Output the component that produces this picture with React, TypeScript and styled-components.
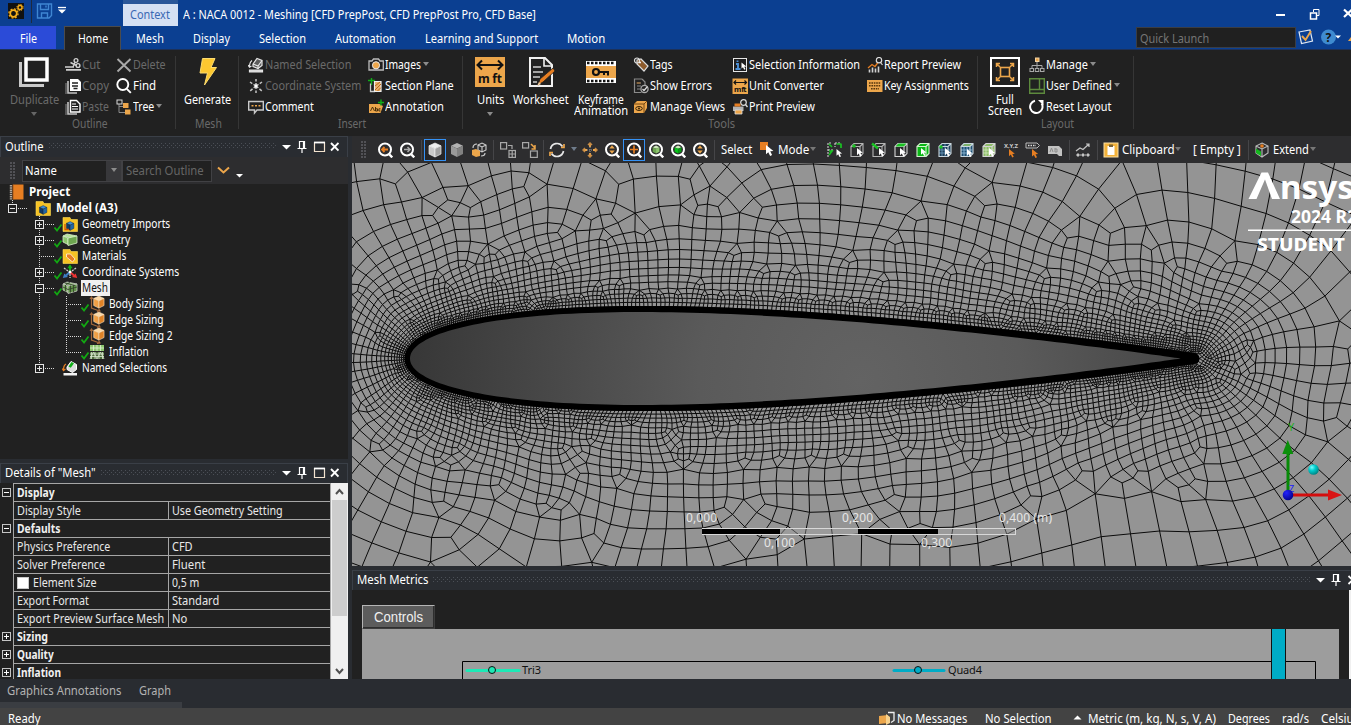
import React, { useLayoutEffect, useRef, useState } from 'react';
import styled, { createGlobalStyle } from 'styled-components';

/* ------------------------------------------------------------------ */
/* Theme                                                               */
/* ------------------------------------------------------------------ */
const c = {
  blue: '#0b3f91',
  dark: '#212121',
  bar: '#2d2d2f',
  frame: '#292c31',
  edge: '#3a3f47',
  text: '#ffffff',
  dim: '#6a6a6a',
  orange: '#eca64b',
  deep: '#e67e22',
  green: '#0fae17',
};

const Global = createGlobalStyle`
  html, body { margin: 0; padding: 0; background: ${c.frame}; overflow: hidden; }
  *, *::before, *::after { box-sizing: border-box; }
  body { font-family: "Noto Sans", "Open Sans", sans-serif; font-size: 12px; color: ${c.text}; }
  svg { display: block; flex: none; }
`;

/* ------------------------------------------------------------------ */
/* Text condensed or tracked to a given width                          */
/* ------------------------------------------------------------------ */
const Text = styled.span<{ $w: number; $color?: string; $bold?: boolean; $size?: number }>`
  display: block;
  flex: none;
  width: ${(p) => p.$w}px;
  white-space: pre;
  line-height: 16px;
  color: ${(p) => p.$color || c.text};
  font-weight: ${(p) => (p.$bold ? 700 : 400)};
  font-size: ${(p) => p.$size || 12}px;
`;
const Glyphs = styled.span`
  display: inline-block;
  vertical-align: top;
  line-height: inherit;
  transform-origin: 0 50%;
`;

type FitProps = { w: number; children: string; color?: string; bold?: boolean; size?: number };
function Fit({ w, children, color, bold, size }: FitProps) {
  const ref = useRef<HTMLSpanElement>(null);
  const [natural, setNatural] = useState(0);
  useLayoutEffect(() => {
    if (ref.current) setNatural(ref.current.offsetWidth);
  }, [children]);
  const adjust: React.CSSProperties = natural > w ? { transform: `scaleX(${w / natural})` } : {};
  return (
    <Text $w={w} $color={color} $bold={bold} $size={size}>
      <Glyphs ref={ref} style={adjust}>{children}</Glyphs>
    </Text>
  );
}

/* ------------------------------------------------------------------ */
/* Icons                                                               */
/* ------------------------------------------------------------------ */
const lens = (color = '#fff') => (
  <g fill="none" stroke={color} strokeWidth="2">
    <circle cx="8" cy="7.5" r="6" />
    <path d="M12.2 12.2l3 3.2" strokeWidth="2.4" />
  </g>
);
const cubeLines = (s: string) => (
  <path d="M2 4.500h9v10h-9zM2 4.500l3-3h9v10l-3 3M11 4.500l3-3" fill="none" stroke={s} strokeWidth="1.100" />
);
const pointer = (x: number, y: number, f = '#fff', k = 1) => (
  <path transform={`translate(${x} ${y}) scale(${k})`} d="M0 0v8l2-1.800 1.600 3.300 1.700-.8-1.600-3.200 2.800-.2z" fill={f} />
);
const sheetPair = (
  <g>
    <path d="M3 3v12h9" fill="none" stroke="#c4c4c4" strokeWidth="1.600" />
    <path d="M1 5v11" stroke="#8d8d8d" strokeWidth="1" />
  </g>
);
const iso = (top: string, left: string, right: string, line?: string) => (
  <g stroke={line || 'none'} strokeWidth=".7" strokeLinejoin="round">
    <path d="M8 1l6 2.800-6 2.800-6-2.800z" fill={top} />
    <path d="M2 3.800l6 2.800v8.400l-6-3z" fill={left} />
    <path d="M14 3.800l-6 2.800v8.400l6-3z" fill={right} />
  </g>
);
const folder = <path d="M1 1.500h7l1 2h6.500V15.500H1z" fill="#f7c325" stroke="#fddc55" strokeWidth=".6" />;
const smallCube = (
  <g transform="translate(3.200 5) scale(.62)">{iso('#3f8fd8', '#123a66', '#2267a8', '#0d2440')}</g>
);
const longBox = (line: string) => (
  <g stroke={line} strokeWidth=".8" strokeLinejoin="round">
    <path d="M1 4l4-2 10 2-4 2.500z" fill="#b6e39a" />
    <path d="M1 4l5 2v6.500L1 10z" fill="#8cc66d" />
    <path d="M6 6l9-2v7l-9 2.500z" fill="#6da650" />
  </g>
);

const icons: Record<string, React.ReactNode> = {
  cut: (
    <g fill="none" stroke="#d0d0d0" strokeWidth="1.400">
      <path d="M0 10h9M1 12.800h15" strokeWidth="1.700" /><circle cx="11" cy="3.500" r="1.900" /><circle cx="13" cy="8.500" r="1.900" /><path d="M10 5.500l-2 4.500M11.500 8.500l-6-3" />
    </g>
  ),
  copy: (<g>{sheetPair}<path d="M5 1h8l3 3v9H5z" fill="#fff" /><path d="M7 5h6M7 8h6M8.500 10.500h4" stroke="#212121" strokeWidth="1.300" /></g>),
  paste: (<g>{sheetPair}<path d="M5.500 1.500h6l3.500 3.500v8H5.500z" fill="#212121" stroke="#fff" strokeWidth="1.400" /><path d="M7 5h4M7 7.500h6M7 10h6" stroke="#fff" strokeWidth="1" /></g>),
  delete: <path d="M1.500 2l13 12.500M14.500 2l-13 12.500" stroke="#a9a9a9" strokeWidth="1.900" fill="none" />,
  find: <g fill="none" stroke="#fff" strokeWidth="1.900"><circle cx="6.800" cy="6.500" r="5.500" /><path d="M10.800 10.800l4 4" /></g>,
  tree: (
    <g>
      <path d="M3 5v8.500h6M3 7.500h4" fill="none" stroke="#8c8c8c" />
      <rect x="1" y="1" width="5" height="4" fill="none" stroke="#d8d8d8" />
      <rect x="7" y="4" width="5.500" height="5" fill={c.orange} /><rect x="9" y="10.500" width="5.500" height="5" fill={c.orange} />
    </g>
  ),
  named: (
    <g fill="none" stroke="#e6e6e6" strokeWidth="1.200">
      <path d="M1.500 13h13v2h-13z" fill="#d5d5d5" /><path d="M5 7l4-5.500 5 2v5l-4 3-5-2z" fill="#5c5c5c" /><path d="M5 7l5 2 4-5.500M10 9v3M4 3.500C2 5 1.500 7 1.500 10M0 8l1.500 2.200L3.500 9" />
    </g>
  ),
  csys: (
    <g stroke="#c4c4c4" strokeWidth="1.500" strokeDasharray="3 1.500"><path d="M8 8V1M8 8L2 4M8 8l6-4M8 8l-6 5M8 8l6 5M8 8v7" /><circle cx="8" cy="8" r="1.600" fill="#fff" stroke="none" /></g>
  ),
  comment: (<g><path d="M.7 2.500h14.600v8.500H9l-2.500 3v-3H.7z" fill="none" stroke="#c9c9c9" strokeWidth="1.400" /><path d="M3.500 6.800h2M7 6.800h2M10.500 6.800h2" stroke={c.orange} strokeWidth="1.500" /></g>),
  camera: (<g><path d="M1 4h3l1.500-2h5L12 4h3.300v9H1z" fill="none" stroke="#bcbcbc" strokeWidth="1.300" /><circle cx="8" cy="8.300" r="3.600" fill={c.orange} stroke="#e8e8e8" /></g>),
  section: (
    <g><path d="M3.500 0v7M0 2.500h7" stroke={c.green} strokeWidth="1.400" /><path d="M2.500 5.500v8H7" fill="none" stroke="#ccc" strokeWidth="1.300" /><path d="M6.500 3.500h6.500v10H6.500z" fill="#e9b06c" stroke="#eee" strokeWidth="1.200" /><path d="M7 8l5-4M7 12l6-6M9.500 13l3.500-3.500" stroke="#b8651a" /></g>
  ),
  annotation: (<g><path d="M1 5h10.500l3.500 2-2.500 7H1z" fill={c.orange} /><path d="M2.500 12l2-4 2 4M7.500 8v4h2V9.800h-2M12.500 9.800h-1.600V12h1.600" fill="none" stroke="#3a2506" strokeWidth=".9" /><path d="M13 .5v6M10 3.500h6" stroke={c.green} strokeWidth="1.400" /></g>),
  tags: (
    <g><path d="M4 3l4-1 7 7-4 5-7-7z" fill="#8d5a2a" stroke="#dcdcdc" strokeWidth="1.200" /><circle cx="4" cy="3.500" r="2.500" fill="none" stroke="#dcdcdc" strokeWidth="1.200" /><circle cx="7" cy="5.500" r="1" fill="#fff" /></g>
  ),
  errors: (
    <g fill="none"><path d="M9 1H1.500v13.500h7M9 1l3 3v3M4 5h4M4 8h4M4 11h3" stroke="#8a8a8a" strokeWidth="1.200" /><path d="M3.500 5h4" stroke="#b87a30" /><circle cx="11.500" cy="11" r="3.600" stroke="#a9a9a9" strokeWidth="1.300" /><path d="M9.500 11l1.500 1.500 3.500-4" stroke="#ddd" strokeWidth="1.200" /></g>
  ),
  views: (<g><path d="M1 5l3-3h10v7l-3 5H1z" fill={c.orange} /><path d="M1 5h10v9M11 5l3-3" stroke="#6b3e0d" strokeWidth=".9" fill="none" /><ellipse cx="6" cy="9.500" rx="3.300" ry="2" fill="none" stroke="#3a2506" /><circle cx="6" cy="9.500" r="1" fill="#3a2506" /></g>),
  selinfo: (<g><rect x="1.500" y="1.500" width="13" height="13" fill="#1d1d1f" stroke="#e6e6e6" /><path d="M5.500 3.500v1.500M4 7h2v5M3.500 12h5" stroke="#4b8fd6" strokeWidth="1.900" fill="none" />{pointer(9.500, 5.500, '#fff', 0.75)}</g>),
  unitconv: (<g><rect x=".5" y=".5" width="15.500" height="15.500" fill={c.orange} /><path d="M2 4.500h12.500M4 2.500l-2 2 2 2M12.500 2.500l2 2-2 2" fill="none" stroke="#111" strokeWidth="1.200" /><text x="2" y="14" fontSize="7.500" fontWeight="700" fill="#111" textLength="12.500">m ft</text></g>),
  print: (<g><circle cx="11.500" cy="3.500" r="2.800" fill="none" stroke="#ddd" strokeWidth="1.200" /><path d="M13.500 5.500l2 2.500" stroke="#ddd" strokeWidth="1.400" /><path d="M1 7.500h10.500v4.500H1z" fill="#b4b4b4" /><path d="M2.500 4.500h6v3h-6z" fill={c.deep} /><path d="M3 11h7v4H3z" fill={c.orange} stroke="#ddd" strokeWidth=".8" /></g>),
  report: (
    <g><path d="M2.500 15.500v-3M5.500 15.500v-5M8.500 15.500v-4M11.500 15.500v-6" stroke="#d0d0d0" strokeWidth="1.600" /><path d="M1 11l4-3.500 3 2 3-4" stroke={c.deep} strokeWidth="1.300" fill="none" /><circle cx="12" cy="3.200" r="2.700" fill="none" stroke="#ddd" strokeWidth="1.200" /><path d="M13.500 5.500l2 2.500" stroke="#ddd" strokeWidth="1.200" /></g>
  ),
  keys: (<g><rect x="0" y="2" width="15.500" height="12" fill={c.orange} /><path d="M2 5h12M2 7.800h12M4 10.800h8" stroke="#55360c" strokeWidth="1.500" strokeDasharray="1.600 .8" /></g>),
  manage: (<g fill="none" stroke="#a8a8a8"><path d="M8 5v4M3 11V8.500h10V11M8 9v2" /><rect x="1" y="11.500" width="3.500" height="3" /><rect x="6.300" y="11.500" width="3.500" height="3" /><rect x="11.500" y="11.500" width="3.500" height="3" /><rect x="6.500" y="1" width="3.500" height="3.500" fill={c.orange} stroke="#f3d3a4" /></g>),
  userdef: <path d="M.7.7h14.600v14.600H.7zM.7 11.500h14.600M10.500.7v10.800M6.500 11.500h0M13 11.500v0" fill="none" stroke="#5d8a3d" strokeWidth="1.400" />,
  reset: (<g fill="none" stroke="#fff" strokeWidth="2"><path d="M12.600 4.500A6.200 6.200 0 1 1 6 1.700" /><path d="M9 1h5.500v5.500z" fill="#fff" stroke="none" /></g>),
  /* graphics toolbar */
  zprev: (<g>{lens()}<path d="M5 7.500h6M7.500 5L5 7.500 7.500 10" fill="none" stroke={c.deep} strokeWidth="1.800" /></g>),
  znext: (<g>{lens()}<path d="M5 7.500h6M8.500 5l2.500 2.500L8.500 10" fill="none" stroke="#aaa" strokeWidth="1.500" /></g>),
  shaded: iso('#ededed', '#c9c9c9', '#a2a2a2', '#eee'),
  shaded2: iso('#b2b2b2', '#9a9a9a', '#818181'),
  wire: (<g><path d="M7 3l4-2 4 2v5l-4 2-4-2zM7 3l4 2 4-2M11 5v5" fill="none" stroke="#ccc" strokeWidth="1.100" /><path d="M1 8l4-1 4 2v5l-4 1-4-2z" fill={c.orange} /><path d="M2 6c0-3 2-4 4-4M14 11c0 2-2 3-4 3" fill="none" stroke="#ccc" strokeWidth="1.200" /></g>),
  grid1: (<g fill="none" stroke="#a8a8a8" strokeWidth="1.200"><rect x=".6" y=".6" width="6" height="6.400" /><rect x="9" y="8.500" width="6.400" height="6.900" /><path d="M12.200 8.500v7M9 12h6.400M8 3.500h4V7" /></g>),
  grid2: (<g fill="none" stroke="#a8a8a8" strokeWidth="1.200"><rect x=".6" y=".6" width="6" height="5.400" /><rect x="8.500" y="9" width="6.800" height="6.400" /><path d="M9 2l4 4M13 3v4H9.500" stroke={c.orange} strokeWidth="1.500" /></g>),
  rotate: (<g fill="none" strokeWidth="1.700"><path d="M1.500 7A6.600 6.600 0 0 1 13.500 4.500M14.500 9A6.600 6.600 0 0 1 2.500 11.500" stroke="#e8e8e8" /><path d="M12 5.500h3V2M4 10.500H1V14" stroke={c.orange} /></g>),
  pan: (<g fill="none" strokeWidth="1.500"><path d="M8 5V1.500M8 11v3.500M5 8H1.500M11 8h3.500" stroke={c.orange} strokeWidth="1.800" /><path d="M6 3l2-2 2 2M6 13l2 2 2-2M3 6L1 8l2 2M13 6l2 2-2 2" stroke="#c58a45" /><path d="M8 5v6M5 8h6" stroke="#777" strokeDasharray="1 1" /></g>),
  zoomud: (<g>{lens()}<path d="M8 3.300l2.700 3.200H5.300zM8 11.700L5.300 8.500h5.400z" fill={c.orange} /></g>),
  zoombox: (<g>{lens()}<path d="M8 3.500v8M4 7.500h8" stroke={c.deep} strokeWidth="1.700" /></g>),
  zoomfit: (<g>{lens()}<g transform="translate(3.500 3) scale(.57)">{iso('#cfe8bd', '#6da650', '#8fc870')}</g></g>),
  zoomsel: (<g>{lens()}<g transform="translate(3.500 3) scale(.57)">{iso('#cfe8bd', '#09c31a', '#0a9b17')}</g></g>),
  mode: (<g><path d="M0 0h8v8H0z" fill={c.deep} />{pointer(6, 3, '#fff', 1.15)}</g>),
  fourc: (<g><path d="M1 15V1h4M1 8h5M8 1h6M8 1v4" stroke="#cfcfcf" strokeWidth="1.100" strokeDasharray="2 1" fill="none" /><path d="M2 2l3 3M9.500 2h5M14 2v4M2 9l3 0-3 4" stroke="#19c322" strokeWidth="1.700" fill="none" />{pointer(9.500, 7, '#fff', 0.85)}</g>),
  selv: (<g>{cubeLines('#b5b5b5')}<circle cx="5" cy="4" r="1.800" fill="#19c322" />{pointer(8, 6, '#fff', 0.9)}</g>),
  sele: (<g>{cubeLines('#b5b5b5')}<path d="M1 1.500l6 5" stroke="#19c322" strokeWidth="2.400" />{pointer(8, 6, '#fff', 0.9)}</g>),
  self: (<g>{cubeLines('#d5d5d5')}<path d="M2.500 4.500l3-3h8l-3 3z" fill="#19c322" />{pointer(7, 6, '#fff', 0.9)}</g>),
  selb: (<g><path d="M2 4.500l3-3h9v10l-3 3H2z" fill="#0bb716" />{cubeLines('#d4f3cf')}{pointer(6, 6, '#fff', 0.85)}</g>),
  seln: (<g><path d="M2 4.500l3-3h9v10l-3 3H2z" fill="#1d3d57" /><path d="M5 4v10M8 2v12M2 8h11M2 11h11" stroke="#6d9fc2" strokeWidth=".8" />{cubeLines('#c9d7df')}<circle cx="4" cy="5" r="1.700" fill="#19c322" />{pointer(8, 6, '#fff', 0.9)}</g>),
  self2: (<g><path d="M2 4.500l3-3h9v10l-3 3H2z" fill="#1f4f72" /><path d="M2 4.500l3-3h9l-3 3z" fill="#7cb06b" /><path d="M5 4v10M8 4v10M2 8h11M2 11h11" stroke="#8bb7d6" strokeWidth=".9" />{cubeLines('#c9d7df')}{pointer(8, 7, '#fff', 0.85)}</g>),
  selel: (<g><path d="M2 4.500l3-3h9v10l-3 3H2z" fill="#8dbb68" /><path d="M5 4v10M8 4v10M2 8h11M2 11h11" stroke="#d3ebbf" strokeWidth=".8" />{cubeLines('#d3d3d3')}{pointer(8, 6, '#fff', 0.95)}</g>),
  xyz: (<g><text x="1" y="5.500" fontSize="6" fontWeight="700" fill="#c9c9c9" textLength="14">X,Y,Z</text>{pointer(6, 7, c.deep, 0.9)}</g>),
  probe: (<g><path d="M1 1h11l2.500 2.500L12 6H1z" fill="none" stroke="#bbb" /><path d="M3 3.500h8" stroke="#ddd" strokeWidth="1.500" strokeDasharray="1.500 1" />{pointer(7, 7, c.deep, 0.95)}</g>),
  label: (<g><path d="M1 4h11l3 3v7h-3l-2-2H1z" fill="#c2c2c2" /><path d="M3 10l1.500-4L6 10M8 6v4h2V7H8" fill="none" stroke="#8b8b8b" /></g>),
  chart: (<g fill="none" stroke="#c4c4c4" strokeWidth="1.200"><path d="M1 9l4-3 3 1.500L14 2M11 2h3v3M1 13h14" /><path d="M3 11.500v3M8 11.500v3M13 11.500v3" strokeWidth="2" /></g>),
  clipboard: (<g><rect x="1" y="1" width="14" height="14" fill="#f3b23a" stroke="#fbe0a5" /><rect x="4.500" y="4" width="7" height="9" fill="#fff" /><rect x="6" y="2.500" width="4" height="2.500" fill="#7c6435" /></g>),
  extend: (<g><g fill="none" stroke="#bcbcbc" strokeWidth="1.100"><path d="M8 1l6 3v7l-6 4-6-4V4zM2 4l6 3 6-3M8 7v8" /></g><path d="M2 6.500l5 3V14l-5-3z" fill="#13b81d" /><circle cx="8" cy="4" r="1.800" fill={c.deep} /></g>),
  /* tree */
  project: (<g><path d="M5 0.500h10.500v15H5z" fill={c.deep} /><path d="M3 1v14.500" stroke="#b2a89c" strokeWidth="2.400" strokeDasharray="1.500 .7" /><path d="M4.800 .5v15" stroke="#7d451a" /></g>),
  model: (<g>{folder}{smallCube}</g>),
  geomimp: (<g>{folder}{smallCube}<path d="M3 8v5.500h4" fill="none" stroke="#d35400" strokeWidth="1.300" /></g>),
  geometry: longBox('#d9f0ca'),
  materials: (<g>{folder}<path d="M4.500 6l4 0 4.500 5-2.500 3-6-5z" fill={c.deep} stroke="#fff" strokeWidth=".7" /></g>),
  coords: (
    <g strokeWidth="2"><path d="M8 7V1.500" stroke={c.green} /><path d="M5.300 4.300L8 .5l2.700 3.800z" fill={c.green} /><path d="M8 8l-4 3.500" stroke="#3d7fc4" /><path d="M.8 14l1.500-4.500L6 13z" fill="#3d7fc4" /><path d="M8 8l4 3.500" stroke="#e33" /><path d="M15.200 14l-1.500-4.500L10 13z" fill="#e33" /><path d="M2 4l4 3M14 4l-4 3M8 10v4" stroke="#ccc" strokeWidth="1.300" strokeDasharray="2 1" /><circle cx="8" cy="8" r="1.500" fill="#fff" /></g>
  ),
  mesh: (<g><g opacity=".85">{longBox('#e2e9dc')}</g><path d="M3 3l10 2.500M8 2.500l-4 2M3.500 5v6.500M8.500 5.500v7M11.500 5v7M1 7l5 2.500 9-2.500" fill="none" stroke="#33452a" strokeWidth=".9" /></g>),
  sizing: (<g><g transform="translate(3 -.8) scale(.86)">{iso('#fbd9a8', '#ef9f45', '#dd8227', '#ffe3bd')}</g><path d="M2.500 1v11l8 3M1 3l1.500-2L4 3M8 15.500l3-.5-1.500-2.500" fill="none" stroke="#a3683a" strokeWidth="1.200" /></g>),
  inflation: (<g><path d="M1 1h14v6H1z" fill="#8dc66f" /><path d="M1 4h14M4.500 1v6M8 1v6M11.500 1v6" stroke="#e1f3d6" strokeWidth=".8" /><path d="M1 8h14v7H1z" fill="#4d6b3d" /><path d="M1 10h14M1 12.500h14M1 15l3.500-7L8 15l3.500-7 3.500 7M2.500 8v7M6 8v7M10 8v7M13.500 8v7" fill="none" stroke="#d9e8cf" strokeWidth=".8" /></g>),
  namedc: (<g><path d="M1.500 13h13.500v2.500H1.500z" fill="#f3f3f3" /><path d="M5 7l4-5.500 5.500 3v5l-4 3-5.500-3z" fill="#dcdcdc" stroke="#fff" /><path d="M6.500 6.500l3-4.500 2.500 1.200-3.200 4.600z" fill={c.green} /><path d="M4 4c-2 1-2.500 3-2.500 6M.3 8.500l1.200 2 2-1.500" fill="none" stroke={c.deep} strokeWidth="1.300" /></g>),
};

function Icon({ name, size = 16 }: { name: string; size?: number }) {
  return <svg width={size} height={size} viewBox="0 0 16 16">{icons[name]}</svg>;
}

const Caret = styled.i<{ $color?: string; $ml?: number }>`
  display: block;
  flex: none;
  margin-left: ${(p) => p.$ml ?? 1}px;
  margin-bottom: 1px;
  border: 3.5px solid transparent;
  border-top: 4px solid ${(p) => p.$color || '#8b8b8b'};
  border-bottom: 0;
`;

/* ------------------------------------------------------------------ */
/* Title bar and tabs                                                  */
/* ------------------------------------------------------------------ */
const Window = styled.div`
  width: 1351px;
  height: 725px;
  display: flex;
  flex-direction: column;
  overflow: hidden;
  background: ${c.frame};
`;
const TitleBar = styled.div`
  height: 26px;
  flex: none;
  display: flex;
  background: ${c.blue};
`;
const QuickTools = styled.div`
  width: 123px;
  padding: 3px 0 0 8px;
  display: flex;
  align-items: flex-start;
`;
const ToolDivider = styled.i`
  width: 1px;
  height: 23px;
  margin: -3px 4px 0 7px;
  background: #1f2a3f;
`;
const ContextTab = styled.div`
  width: 55px;
  height: 26px;
  border-top: 4px solid #2a5699;
  background: #d5e0f3;
  padding: 3px 0 0 7px;
`;
const DocTitle = styled.div`
  padding: 7px 0 0 5px;
  flex: 1;
`;
const WindowButtons = styled.div`
  padding: 8px 0 0;
  width: 75px;
`;
const TabRow = styled.div`
  height: 24px;
  flex: none;
  display: flex;
  background: ${c.blue};
  border-bottom: 1px solid #1d3159;
`;
const Tab = styled.div<{ $w: number; $kind?: 'file' | 'active'; $gap?: number }>`
  width: ${(p) => p.$w}px;
  margin-left: ${(p) => p.$gap || 0}px;
  height: ${(p) => (p.$kind === 'active' ? 24 : 23)}px;
  padding-top: ${(p) => (p.$kind === 'active' ? 4 : 5)}px;
  display: flex;
  justify-content: center;
  background: ${(p) => (p.$kind === 'file' ? '#2b4bd8' : p.$kind === 'active' ? c.dark : 'transparent')};
  border: ${(p) => (p.$kind === 'active' ? '1px solid #4b4b4b' : '0')};
  border-bottom: 0;
`;
const TabTail = styled.div`
  margin-left: auto;
  width: 215px;
  display: flex;
  padding-top: 1px;
`;
const Search = styled.div`
  width: 160px;
  height: 21px;
  border: 1px solid #3a3d44;
  background: #202020;
  padding: 3px 3px;
`;

/* ------------------------------------------------------------------ */
/* Ribbon                                                              */
/* ------------------------------------------------------------------ */
const Ribbon = styled.div`
  height: 86px;
  flex: none;
  display: flex;
  background: ${c.dark};
`;
const Group = styled.section<{ $w: number }>`
  width: ${(p) => p.$w}px;
  height: 86px;
  flex: none;
  position: relative;
  display: flex;
  flex-direction: column;
  &::after {
    content: '';
    position: absolute;
    right: 0;
    top: 6px;
    height: 73px;
    width: 1px;
    background: #363636;
  }
`;
const GroupBody = styled.div`
  display: flex;
  height: 66px;
  flex: none;
`;
const GroupName = styled.div<{ $pad: number }>`
  padding-left: ${(p) => p.$pad}px;
`;
const Big = styled.div<{ $w: number; $gap?: number }>`
  width: ${(p) => p.$w}px;
  margin-left: ${(p) => p.$gap || 0}px;
  padding-top: 7px;
  flex: none;
  display: flex;
  flex-direction: column;
  align-items: center;
`;
const BigLabel = styled.div`
  margin: 7px 0;
  display: flex;
  flex-direction: column;
  align-items: center;
  && > * { line-height: 11px; }
`;
const Column = styled.div<{ $w: number; $gap?: number }>`
  width: ${(p) => p.$w}px;
  margin-left: ${(p) => p.$gap || 0}px;
  padding-top: 4px;
  flex: none;
`;
const Item = styled.div`
  height: 21px;
  display: flex;
  align-items: center;
  gap: 1px;
`;

type Cmd = { icon: string; text: string; w: number; off?: boolean; caret?: boolean };
function Commands({ w, gap, items }: { w: number; gap?: number; items: Cmd[] }) {
  return (
    <Column $w={w} $gap={gap}>
      {items.map((it) => (
        <Item key={it.text}>
          <Icon name={it.icon} />
          <Fit w={it.w} color={it.off ? c.dim : c.text}>{it.text}</Fit>
          {it.caret && <Caret />}
        </Item>
      ))}
    </Column>
  );
}

function RibbonBar() {
  return (
    <Ribbon>
      <Group $w={176}>
        <GroupBody>
          <Big $w={68}>
            <svg width="30" height="30" viewBox="0 0 30 30"><path d="M1.500 5v23.500H25" fill="none" stroke="#c9c9c9" strokeWidth="3" /><rect x="7" y="2" width="21" height="21" fill="#212121" stroke="#fff" strokeWidth="3.500" /></svg>
            <BigLabel><Fit w={49} color={c.dim}>Duplicate</Fit></BigLabel>
            <Caret $ml={0} $color="#666" />
          </Big>
          <Commands w={48} gap={-3} items={[{ icon: 'cut', text: 'Cut', w: 18, off: true }, { icon: 'copy', text: 'Copy', w: 27, off: true }, { icon: 'paste', text: 'Paste', w: 27, off: true }]} />
          <Commands w={58} gap={3} items={[{ icon: 'delete', text: 'Delete', w: 33, off: true }, { icon: 'find', text: 'Find', w: 23 }, { icon: 'tree', text: 'Tree', w: 21, caret: true }]} />
        </GroupBody>
        <GroupName $pad={72}><Fit w={36} color={c.dim}>Outline</Fit></GroupName>
      </Group>
      <Group $w={63}>
        <GroupBody>
          <Big $w={63}>
            <svg width="30" height="30" viewBox="0 0 30 30"><path d="M9.500 1.500H22l-4 9h5.500L11.500 28l3-12H7z" fill="#fdc830" stroke="#fddc70" /></svg>
            <BigLabel><Fit w={47}>Generate</Fit></BigLabel>
          </Big>
        </GroupBody>
        <GroupName $pad={19}><Fit w={27} color={c.dim}>Mesh</Fit></GroupName>
      </Group>
      <Group $w={224}>
        <GroupBody>
          <Commands w={119} gap={9} items={[{ icon: 'named', text: 'Named Selection', w: 86, off: true }, { icon: 'csys', text: 'Coordinate System', w: 96, off: true }, { icon: 'comment', text: 'Comment', w: 49 }]} />
          <Commands w={90} gap={1} items={[{ icon: 'camera', text: 'Images', w: 36, caret: true }, { icon: 'section', text: 'Section Plane', w: 69 }, { icon: 'annotation', text: 'Annotation', w: 59 }]} />
        </GroupBody>
        <GroupName $pad={99}><Fit w={28} color={c.dim}>Insert</Fit></GroupName>
      </Group>
      <Group $w={515}>
        <GroupBody>
          <Big $w={30} $gap={12}>
            <svg width="30" height="30" viewBox="0 0 30 30"><rect width="30" height="30" fill={c.orange} /><path d="M3 8h24M7 3.500L2.500 8 7 12.500M23 3.500L27.500 8 23 12.500" fill="none" stroke="#111" strokeWidth="2" /><text x="3" y="25.500" fontSize="12" fontWeight="700" fill="#111" textLength="24">m ft</text></svg>
            <BigLabel><Fit w={27}>Units</Fit></BigLabel>
            <Caret $ml={0} />
          </Big>
          <Big $w={60} $gap={6}>
            <svg width="30" height="30" viewBox="0 0 30 30">
              <path d="M4 1h15l7 7v21H4z" fill="#212121" stroke="#f1f1f1" strokeWidth="2" /><path d="M18 1v8h8" fill="none" stroke="#f1f1f1" strokeWidth="1.600" />
              <path d="M7 10h8M7 15h10M7 20h7M7 25h4" stroke="#d0d0d0" strokeWidth="1.300" /><path d="M12 28l2-6L27 11l2 3-12 11z" fill={c.deep} stroke="#212121" strokeWidth=".8" /><path d="M11 29l2-4 2 2z" fill="#f6cfa2" />
            </svg>
            <BigLabel><Fit w={56}>Worksheet</Fit></BigLabel>
          </Big>
          <Big $w={60}>
            <svg width="30" height="30" viewBox="0 0 30 30"><rect y="4" width="30" height="22" fill="#fff" /><path d="M1 6h28M1 24h28" stroke="#111" strokeWidth="2.500" strokeDasharray="2.500 1.500" /><rect y="9" width="30" height="12" fill={c.orange} /><circle cx="10" cy="15" r="3" fill="none" stroke="#111" strokeWidth="2.200" /><path d="M13 15h10M18 15v3M22 15v3.500" stroke="#111" strokeWidth="2" /></svg>
            <BigLabel><Fit w={46}>Keyframe</Fit><Fit w={54}>Animation</Fit></BigLabel>
          </Big>
          <Commands w={95} gap={2} items={[{ icon: 'tags', text: 'Tags', w: 23 }, { icon: 'errors', text: 'Show Errors', w: 62 }, { icon: 'views', text: 'Manage Views', w: 75 }]} />
          <Commands w={131} gap={4} items={[{ icon: 'selinfo', text: 'Selection Information', w: 111 }, { icon: 'unitconv', text: 'Unit Converter', w: 75 }, { icon: 'print', text: 'Print Preview', w: 66 }]} />
          <Commands w={105} gap={4} items={[{ icon: 'report', text: 'Report Preview', w: 77 }, { icon: 'keys', text: 'Key Assignments', w: 85 }]} />
        </GroupBody>
        <GroupName $pad={245}><Fit w={27} color={c.dim}>Tools</Fit></GroupName>
      </Group>
      <Group $w={156}>
        <GroupBody>
          <Big $w={36} $gap={9}>
            <svg width="30" height="30" viewBox="0 0 30 30"><rect x="1" y="1" width="28" height="28" fill="none" stroke="#fff" strokeWidth="2" /><rect x="10.500" y="10.500" width="9" height="9" fill="none" stroke={c.orange} strokeWidth="1.600" /><path d="M10 10L6.500 6.500M20 10l3.500-3.500M10 20l-3.500 3.500M20 20l3.500 3.500M6.500 10V6.500H10M20 6.500h3.500V10M6.500 20v3.500H10M20 23.500h3.500V20" fill="none" stroke={c.orange} strokeWidth="1.500" /></svg>
            <BigLabel><Fit w={18}>Full</Fit><Fit w={34}>Screen</Fit></BigLabel>
          </Big>
          <Commands w={100} gap={6} items={[{ icon: 'manage', text: 'Manage', w: 42, caret: true }, { icon: 'userdef', text: 'User Defined', w: 66, caret: true }, { icon: 'reset', text: 'Reset Layout', w: 65 }]} />
        </GroupBody>
        <GroupName $pad={63}><Fit w={33} color={c.dim}>Layout</Fit></GroupName>
      </Group>
    </Ribbon>
  );
}

/* ------------------------------------------------------------------ */
/* Docked panels                                                       */
/* ------------------------------------------------------------------ */
const Workspace = styled.div`
  flex: none;
  height: 543px;
  display: flex;
  gap: 4px;
`;
const LeftDock = styled.div`
  width: 348px;
  flex: none;
  display: flex;
  flex-direction: column;
`;
const PanelHead = styled.div<{ $h: number }>`
  height: ${(p) => p.$h}px;
  flex: none;
  display: flex;
  align-items: center;
  padding: 0 8px 1px 4px;
  border: 1px solid ${c.edge};
  border-bottom: 0;
  background: ${c.frame};
`;
const Dots = styled.i`
  flex: 1;
  height: 6px;
  margin: 0 5px 1px;
  background-image: linear-gradient(#44484f, #44484f), linear-gradient(#44484f, #44484f);
  background-size: 1px 1px, 1px 1px;
  background: radial-gradient(circle at 0.5px 0.5px, #4b4f56 0.6px, transparent 0.7px) 0 0 / 4px 4px,
    radial-gradient(circle at 0.5px 0.5px, #4b4f56 0.6px, transparent 0.7px) 2px 2px / 4px 4px;
`;
const HeadIcons = () => (
  <svg width="57" height="14" viewBox="0 0 57 14">
    <path d="M0 5h9L4.500 9.500z" fill="#fff" />
    <path d="M17.500 1.500h5v7h-5zM15.500 8.500h9M20 9v4M21.500 2v6" fill="none" stroke="#fff" strokeWidth="1.200" />
    <path d="M32.500 2.500h10v9h-10z" fill="none" stroke="#f3e3cf" strokeWidth="1.200" /><path d="M32 2.500h11" stroke="#fff" strokeWidth="1.800" />
    <path d="M49 3l7.500 7.500M56.500 3l-7.500 7.500" stroke="#fff" strokeWidth="1.900" />
  </svg>
);
const FilterBar = styled.div`
  height: 27px;
  flex: none;
  display: flex;
  align-items: center;
  background: ${c.bar};
`;
const Grip = styled.i<{ $ml: number }>`
  width: 6px;
  height: 17px;
  margin-left: ${(p) => p.$ml}px;
  flex: none;
  background-image: radial-gradient(circle at 1px 1px, #55555a 0.7px, transparent 0.8px);
  background-size: 3px 3px;
`;
const Combo = styled.div`
  width: 100px;
  height: 22px;
  margin-left: 6px;
  border: 1px solid #414144;
  background: ${c.dark};
  display: flex;
  align-items: center;
  justify-content: space-between;
  padding-left: 2px;
`;
const ComboButton = styled.span`
  width: 15px;
  height: 20px;
  background: #38383b;
  display: flex;
  align-items: center;
  justify-content: center;
`;
const FilterInput = styled.div`
  width: 90px;
  height: 22px;
  border: 1px solid #414144;
  background: ${c.dark};
  padding: 2px 3px;
`;
const TreeArea = styled.div`
  height: 275px;
  flex: none;
  background: ${c.dark};
`;
const TreeRow = styled.div`
  height: 16px;
  display: flex;
  position: relative;
`;
const TreeLabel = styled.div<{ $sel?: boolean }>`
  margin-left: ${(p) => (p.$sel ? -1 : 0)}px;
  padding: 0 ${(p) => (p.$sel ? 2 : 0)}px 0 ${(p) => (p.$sel ? 1 : 0)}px;
  background: ${(p) => (p.$sel ? '#f0f0f0' : 'transparent')};
`;

type Node = { level: number; icon: string; text: string; w: number; box?: '+' | '-'; bold?: boolean; sel?: boolean; last?: boolean };
const nodes: Node[] = [
  { level: 0, icon: 'project', text: 'Project', w: 41, bold: true },
  { level: 1, icon: 'model', text: 'Model (A3)', w: 62, bold: true, box: '-' },
  { level: 2, icon: 'geomimp', text: 'Geometry Imports', w: 88, box: '+' },
  { level: 2, icon: 'geometry', text: 'Geometry', w: 48, box: '+' },
  { level: 2, icon: 'materials', text: 'Materials', w: 44 },
  { level: 2, icon: 'coords', text: 'Coordinate Systems', w: 97, box: '+' },
  { level: 2, icon: 'mesh', text: 'Mesh', w: 26, box: '-', sel: true },
  { level: 3, icon: 'sizing', text: 'Body Sizing', w: 55 },
  { level: 3, icon: 'sizing', text: 'Edge Sizing', w: 55 },
  { level: 3, icon: 'sizing', text: 'Edge Sizing 2', w: 64 },
  { level: 3, icon: 'inflation', text: 'Inflation', w: 40, last: true },
  { level: 2, icon: 'namedc', text: 'Named Selections', w: 85, box: '+', last: true },
];

function TreeGutter({ n }: { n: Node }) {
  const textX = [29, 56, 82, 109][n.level];
  const iconX = [8, 35, 62, 89][n.level];
  const boxX = [0, 12.5, 39.5, 66.5][n.level];
  const check = n.level > 1 && n.icon !== 'namedc';
  return (
    <svg width={textX} height="16" viewBox={`0 0 ${textX} 16`}>
      <g fill="none" stroke="#d8d8d8" strokeDasharray="1 1" shapeRendering="crispEdges">
        {n.level === 1 && <path d="M12.500 0v4" />}
        {n.level === 2 && <path d={`M39.500 0V${n.last ? 8 : 16}`} />}
        {n.level === 3 && <path d={`M39.500 0V16M66.500 0V${n.last ? 8 : 16}`} />}
        {n.level > 0 && <path d={`M${boxX - 0.5} 8.500H${[0, 27, 54, 81][n.level]}`} />}
      </g>
      {n.box && (
        <g stroke="#e4e4e4" fill="none">
          <rect x={boxX - 4} y="4.500" width="8" height="8" fill={c.dark} />
          <path d={`M${boxX - 2.5} 8.500h5`} />
          {n.box === '+' && <path d={`M${boxX} 6v5`} />}
        </g>
      )}
      {check && <path d={`M${iconX - 7.500} 11.500l2.500 3 4.500-6`} fill="none" stroke="#12a812" strokeWidth="1.800" />}
      <svg x={iconX} y="0" width="16" height="16" viewBox="0 0 16 16">{icons[n.icon]}</svg>
    </svg>
  );
}

const DetailsDock = styled.div`
  margin-top: 4px;
  flex: none;
`;
const DetailsBody = styled.div`
  height: 196px;
  flex: none;
  display: flex;
  overflow: hidden;
`;
const Grid = styled.div`
  width: 331px;
  background: ${c.dark};
`;
const GridRow = styled.div`
  height: 18px;
  display: flex;
`;
const Fold = styled.div`
  width: 14px;
  border-right: 1px solid #a6a6a6;
  padding: 5px 0 0 2px;
  flex: none;
`;
const Cell = styled.div<{ $w: number }>`
  width: ${(p) => p.$w}px;
  border-top: 1px solid #a6a6a6;
  border-right: 1px solid #a6a6a6;
  padding-left: 3px;
  display: flex;
  align-items: center;
  gap: 4px;
`;
const Check = styled.i`
  width: 12px;
  height: 12px;
  background: #fff;
  border: 1px solid #c9c9c9;
`;
const ScrollBar = styled.div`
  width: 17px;
  background: #f0f0f0;
  display: flex;
  flex-direction: column;
  align-items: center;
`;
const Thumb = styled.i`
  width: 15px;
  height: 116px;
  flex: none;
  background: #cdcdcd;
`;

type Row = { name: string; w: number; value?: string; vw?: number; fold?: '+' | '-'; check?: boolean };
const rows: Row[] = [
  { name: 'Display', w: 38, fold: '-' },
  { name: 'Display Style', w: 64, value: 'Use Geometry Setting', vw: 111 },
  { name: 'Defaults', w: 43, fold: '-' },
  { name: 'Physics Preference', w: 93, value: 'CFD', vw: 21 },
  { name: 'Solver Preference', w: 88, value: 'Fluent', vw: 33 },
  { name: 'Element Size', w: 64, value: '0,5 m', vw: 27, check: true },
  { name: 'Export Format', w: 72, value: 'Standard', vw: 47 },
  { name: 'Export Preview Surface Mesh', w: 147, value: 'No', vw: 15 },
  { name: 'Sizing', w: 31, fold: '+' },
  { name: 'Quality', w: 37, fold: '+' },
  { name: 'Inflation', w: 44, fold: '+' },
];

function Details() {
  return (
    <DetailsBody>
      <Grid>
        {rows.map((r) => (
          <GridRow key={r.name}>
            <Fold>
              {r.fold && (
                <svg width="9" height="9" viewBox="0 0 9 9">
                  <path d={r.fold === '+' ? 'M2 4.500h5M4.500 2v5' : 'M2 4.500h5'} stroke="#fff" />
                  <rect x=".5" y=".5" width="8" height="8" fill="none" stroke="#c4c4c4" />
                </svg>
              )}
            </Fold>
            {r.fold ? (
              <Cell $w={317}><Fit w={r.w} bold color="#f0f0f0">{r.name}</Fit></Cell>
            ) : (
              <>
                <Cell $w={155}>{r.check && <Check />}<Fit w={r.w} color="#e8e8e8">{r.name}</Fit></Cell>
                <Cell $w={162}><Fit w={r.vw || 0} color="#e8e8e8">{r.value || ''}</Fit></Cell>
              </>
            )}
          </GridRow>
        ))}
      </Grid>
      <ScrollBar>
        <svg width="17" height="17"><path d="M5 11l3.500-4 3.500 4" fill="none" stroke="#505050" strokeWidth="2" /></svg>
        <Thumb />
        <svg width="17" height="63"><path d="M5 53l3.500 4 3.500-4" fill="none" stroke="#505050" strokeWidth="2" /></svg>
      </ScrollBar>
    </DetailsBody>
  );
}

/* ------------------------------------------------------------------ */
/* Graphics toolbar                                                    */
/* ------------------------------------------------------------------ */
const RightDock = styled.div`
  width: 999px;
  flex: none;
  display: flex;
  flex-direction: column;
`;
const ViewBar = styled.div`
  height: 27px;
  flex: none;
  display: flex;
  align-items: center;
  background: ${c.bar};
`;
const Slot = styled.span<{ $on?: boolean; $w?: number }>`
  width: ${(p) => p.$w || 22}px;
  height: 22px;
  flex: none;
  display: flex;
  align-items: center;
  justify-content: center;
  border: 1px solid ${(p) => (p.$on ? '#3592f5' : 'transparent')};
  background: ${(p) => (p.$on ? '#252527' : 'transparent')};
`;
const Bar = styled.i<{ $l: number; $r: number }>`
  width: 1px;
  height: 20px;
  flex: none;
  margin: 0 ${(p) => p.$r}px 0 ${(p) => p.$l}px;
  background: #454548;
`;
const Space = styled.i<{ $w: number }>`
  width: ${(p) => p.$w}px;
  flex: none;
`;
const slots = (names: string[], on?: string) =>
  names.map((n, i) => <Slot key={n + i} $on={n === on}><Icon name={n} /></Slot>);

function GraphicsToolbar() {
  return (
    <ViewBar>
      <Grip $ml={9} />
      <Space $w={7} />
      {slots(['zprev', 'znext'])}
      <Bar $l={3} $r={2} />
      {slots(['shaded', 'shaded2', 'wire'], 'shaded')}
      <Bar $l={3} $r={3} />
      {slots(['grid1', 'grid2'])}
      <Bar $l={2} $r={2} />
      {slots(['rotate'])}
      <Caret $ml={3} $color="#6f7c8b" />
      <Space $w={2} />
      {slots(['pan', 'zoomud', 'zoombox', 'zoomfit', 'zoomsel', 'zoomud'], 'zoombox')}
      <Bar $l={3} $r={6} />
      <Fit w={31}>Select</Fit>
      <Space $w={6} />
      <Slot $w={20}><Icon name="mode" /></Slot>
      <Fit w={31}>Mode</Fit>
      <Caret $ml={1} $color="#777" />
      <Space $w={8} />
      {slots(['fourc', 'selv', 'sele', 'self', 'selb', 'seln', 'self2', 'selel', 'xyz', 'probe', 'label'])}
      <Bar $l={3} $r={2} />
      {slots(['chart'])}
      <Bar $l={3} $r={2} />
      {slots(['clipboard'])}
      <Fit w={53}>Clipboard</Fit>
      <Caret $ml={0} $color="#777" />
      <Space $w={12} />
      <Fit w={48}>[ Empty ]</Fit>
      <Bar $l={7} $r={2} />
      {slots(['extend'])}
      <Fit w={36}>Extend</Fit>
      <Caret $ml={1} $color="#777" />
    </ViewBar>
  );
}

/* ------------------------------------------------------------------ */
/* Mesh around a NACA 0012 section                                     */
/* ------------------------------------------------------------------ */
type P = [number, number];
const LE = 410;
const CHORD = 784;
const AXIS = 358.5;

const halfThickness = (t: number) =>
  0.6 * CHORD * (0.2969 * Math.sqrt(t) - 0.126 * t - 0.3516 * t * t + 0.2843 * t ** 3 - 0.1036 * t ** 4);

function profile(n: number, trim = 0): P[] {
  const pts: P[] = [];
  const half = (t: number) => Math.max(0, halfThickness(t) - trim * t);
  for (let i = 0; i <= n; i++) {
    const t = (1 + Math.cos((Math.PI * i) / n)) / 2;
    pts.push([LE + t * CHORD, AXIS - half(t)]);
  }
  for (let i = n - 1; i >= 0; i--) {
    const t = (1 + Math.cos((Math.PI * i) / n)) / 2;
    pts.push([LE + t * CHORD, AXIS + half(t)]);
  }
  return pts;
}
const toPath = (pts: P[]) => 'M' + pts.map((p) => `${p[0].toFixed(1)} ${p[1].toFixed(1)}`).join('L') + 'Z';

function buildMesh(): string {
  const surface = profile(140);
  const nearest = (x: number, y: number) => {
    let best = 1e9;
    let q = surface[0];
    for (const s of surface) {
      const d = (s[0] - x) ** 2 + (s[1] - y) ** 2;
      if (d < best) { best = d; q = s; }
    }
    return { d: Math.sqrt(best), q };
  };
  const stops: P[] = [[0, 1.9], [0.05, 2.1], [0.15, 2.9], [0.3, 4.2], [0.6, 4.4], [0.8, 3.4], [0.93, 2.3], [1, 1.8]];
  const base = (t: number) => {
    for (let i = 1; i < stops.length; i++) {
      if (t <= stops[i][0]) {
        const [a, va] = stops[i - 1];
        const [b, vb] = stops[i];
        return va + ((vb - va) * (t - a)) / (b - a);
      }
    }
    return 1.8;
  };
  const sizeAt = (x: number, y: number) => {
    const { d, q } = nearest(x, y);
    const t = Math.min(1, Math.max(0, (q[0] - LE) / CHORD));
    return 2 * Math.min(31, base(t) + 0.1 * Math.max(0, d - 5) + 0.0003 * d * d);
  };
  const inside = (x: number, y: number) => {
    const t = (x - LE) / CHORD;
    return t > 0 && t < 1 && Math.abs(y - AXIS) < halfThickness(t) + 2;
  };

  let seed = 20240;
  const rnd = () => {
    seed = (seed * 1664525 + 1013904223) % 4294967296;
    return seed / 4294967296;
  };

  /* wall nodes, walked along the inflation layer edge */
  const pts: P[] = [];
  const wall: P[] = surface.map((s, i) => {
    const a = surface[Math.max(0, i - 1)];
    const b = surface[Math.min(surface.length - 1, i + 1)];
    const tx = b[0] - a[0];
    const ty = b[1] - a[1];
    const l = Math.hypot(tx, ty) || 1;
    const p: P = [s[0] - (ty / l) * 5, s[1] + (tx / l) * 5];
    const dy = p[1] - s[1];
    if (Math.abs(s[1] - AXIS) > 1 && dy * (s[1] - AXIS) < 0) return [2 * s[0] - p[0], 2 * s[1] - p[1]] as P;
    if (s[0] < LE + 3) return [s[0] - 5, s[1]] as P;
    return p;
  });
  let acc = 0;
  pts.push(wall[0]);
  for (let i = 1; i < wall.length; i++) {
    const [ax, ay] = wall[i - 1];
    const [bx, by] = wall[i];
    const len = Math.hypot(bx - ax, by - ay);
    let pos = 0;
    for (;;) {
      const h = sizeAt(ax, ay);
      if (acc + (len - pos) < h) { acc += len - pos; break; }
      pos += h - acc;
      acc = 0;
      pts.push([ax + ((bx - ax) * pos) / len, ay + ((by - ay) * pos) / len]);
    }
  }
  const wallCount = pts.length;

  /* layer by layer packing away from the wall */
  const x0 = 60, x1 = 1640, y0 = -130, y1 = 860;
  for (let i = 0; i < pts.length && pts.length < 6000; i++) {
    const [x, y] = pts[i];
    const h = sizeAt(x, y);
    const { q, d } = nearest(x, y);
    const nx = (x - q[0]) / (d || 1);
    const ny = (y - q[1]) / (d || 1);
    const dirs: P[] = i < wallCount ? [[nx, ny]] : [[nx, ny], [-ny, nx], [ny, -nx]];
    for (const [dx, dy] of dirs) {
      const k = h * (1 + 0.04 * (rnd() - 0.5));
      const px = x + dx * k + (rnd() - 0.5) * h * 0.08;
      const py = y + dy * k + (rnd() - 0.5) * h * 0.08;
      if (px < x0 || px > x1 || py < y0 || py > y1 || inside(px, py)) continue;
      const min = (0.74 * sizeAt(px, py)) ** 2;
      let ok = true;
      for (let j = pts.length - 1; j >= 0; j--) {
        if ((pts[j][0] - px) ** 2 + (pts[j][1] - py) ** 2 < min) { ok = false; break; }
      }
      if (ok) pts.push([px, py]);
    }
  }
  const n = pts.length;

  /* Delaunay triangulation (Bowyer-Watson) */
  type Tri = [number, number, number, number, number, number];
  const all: P[] = pts.map((p) => [p[0] + (rnd() - 0.5) * 0.01, p[1] + (rnd() - 0.5) * 0.01] as P);
  all.push([-18000, -18000], [22000, -18000], [800, 30000]);
  const tri = (a: number, b: number, e: number): Tri => {
    const [ax, ay] = all[a];
    const bx = all[b][0] - ax, by = all[b][1] - ay, cx = all[e][0] - ax, cy = all[e][1] - ay;
    const D = 2 * (bx * cy - by * cx) || 1e-9;
    const ux = (cy * (bx * bx + by * by) - by * (cx * cx + cy * cy)) / D;
    const uy = (bx * (cx * cx + cy * cy) - cx * (bx * bx + by * by)) / D;
    return [a, b, e, ux + ax, uy + ay, ux * ux + uy * uy];
  };
  let tris: Tri[] = [tri(n, n + 1, n + 2)];
  for (let i = 0; i < n; i++) {
    const [x, y] = all[i];
    const keep: Tri[] = [];
    const rim = new Map<number, P>();
    for (const t of tris) {
      if ((t[3] - x) ** 2 + (t[4] - y) ** 2 < t[5]) {
        for (const [a, b] of [[t[0], t[1]], [t[1], t[2]], [t[2], t[0]]]) {
          const key = Math.min(a, b) * 10000 + Math.max(a, b);
          if (rim.has(key)) rim.delete(key);
          else rim.set(key, [a, b]);
        }
      } else keep.push(t);
    }
    rim.forEach(([a, b]) => keep.push(tri(a, b, i)));
    tris = keep;
  }
  const faces = tris.filter((t) => {
    if (t[0] >= n || t[1] >= n || t[2] >= n) return false;
    return !(t[0] < wallCount && t[1] < wallCount && t[2] < wallCount);
  });

  /* pair triangles into quads, best shaped first */
  const edges = new Map<number, number[]>();
  faces.forEach((t, f) => {
    for (const [a, b] of [[t[0], t[1]], [t[1], t[2]], [t[2], t[0]]]) {
      const key = Math.min(a, b) * 10000 + Math.max(a, b);
      const e = edges.get(key);
      if (e) e.push(f);
      else edges.set(key, [f]);
    }
  });
  const pairs: { f: number; g: number; loop: number[]; cost: number }[] = [];
  edges.forEach((e, key) => {
    if (e.length !== 2) return;
    const a = Math.floor(key / 10000);
    const b = key % 10000;
    const [f, g] = e;
    const o1 = [faces[f][0], faces[f][1], faces[f][2]].find((v) => v !== a && v !== b)!;
    const o2 = [faces[g][0], faces[g][1], faces[g][2]].find((v) => v !== a && v !== b)!;
    const loop = [a, o1, b, o2];
    let cost = 0;
    for (let i = 0; i < 4; i++) {
      const p = all[loop[i]], u = all[loop[(i + 1) % 4]], v = all[loop[(i + 3) % 4]];
      const ang = Math.acos(
        ((u[0] - p[0]) * (v[0] - p[0]) + (u[1] - p[1]) * (v[1] - p[1])) /
          (Math.hypot(u[0] - p[0], u[1] - p[1]) * Math.hypot(v[0] - p[0], v[1] - p[1])),
      );
      cost = Math.max(cost, Math.abs(ang - Math.PI / 2));
    }
    pairs.push({ f, g, loop, cost });
  });
  pairs.sort((p, q) => p.cost - q.cost);
  const used = new Set<number>();
  const cells: number[][] = [];
  for (const p of pairs) {
    if (p.cost > 1.1 || used.has(p.f) || used.has(p.g)) continue;
    used.add(p.f);
    used.add(p.g);
    cells.push(p.loop);
  }
  faces.forEach((t, f) => { if (!used.has(f)) cells.push([t[0], t[1], t[2]]); });

  /* split every cell into quads around its centre */
  const v: P[] = all.slice(0, n);
  const fixed: boolean[] = v.map((_, i) => i < wallCount);
  const mids = new Map<number, number>();
  const segs: P[] = [];
  for (const loop of cells) {
    const cx = loop.reduce((s, i) => s + v[i][0], 0) / loop.length;
    const cy = loop.reduce((s, i) => s + v[i][1], 0) / loop.length;
    const center = v.length;
    v.push([cx, cy]);
    fixed.push(false);
    loop.forEach((a, i) => {
      const b = loop[(i + 1) % loop.length];
      const key = Math.min(a, b) * 10000 + Math.max(a, b);
      let m = mids.get(key);
      if (m === undefined) {
        m = v.length;
        v.push([(v[a][0] + v[b][0]) / 2, (v[a][1] + v[b][1]) / 2]);
        fixed.push(a < wallCount && b < wallCount);
        mids.set(key, m);
        segs.push([a, m], [m, b]);
      }
      segs.push([center, m]);
    });
  }
  for (let it = 0; it < 4; it++) {
    const sum = v.map(() => [0, 0, 0]);
    for (const [a, b] of segs) {
      sum[a][0] += v[b][0]; sum[a][1] += v[b][1]; sum[a][2]++;
      sum[b][0] += v[a][0]; sum[b][1] += v[a][1]; sum[b][2]++;
    }
    v.forEach((p, i) => {
      if (fixed[i] || p[0] < 240 || p[0] > 1470 || p[1] < 50 || p[1] > 680) return;
      const [sx, sy, k] = sum[i];
      v[i] = [p[0] * 0.4 + (sx / k) * 0.6, p[1] * 0.4 + (sy / k) * 0.6];
    });
  }
  return segs
    .filter(([a]) => v[a][0] > 290 && v[a][0] < 1420 && v[a][1] > 100 && v[a][1] < 630)
    .map(([a, b]) => `M${v[a][0].toFixed(1)} ${v[a][1].toFixed(1)}L${v[b][0].toFixed(1)} ${v[b][1].toFixed(1)}`)
    .join('');
}

const meshPath = buildMesh();
const wallPath = toPath(profile(120));
const bodyPath = toPath(profile(120, 2));

function Viewport() {
  return (
    <svg width="999" height="403" viewBox="352 163 999 403" fontFamily='"Noto Sans", sans-serif'>
      <defs>
        <radialGradient id="body" gradientUnits="userSpaceOnUse" cx="860" cy="380" r="460">
          <stop offset="0" stopColor="#636363" /><stop offset=".35" stopColor="#5a5a5a" /><stop offset="1" stopColor="#363636" />
        </radialGradient>
        <radialGradient id="ball" cx=".35" cy=".3" r=".8"><stop offset="0" stopColor="#7ff" /><stop offset=".4" stopColor="#0cc" /><stop offset="1" stopColor="#077" /></radialGradient>
        <radialGradient id="origin" cx=".35" cy=".3" r=".8"><stop offset="0" stopColor="#22f" /><stop offset="1" stopColor="#000080" /></radialGradient>
      </defs>
      <rect x="352" y="163" width="999" height="403" fill="#949494" />
      <path d={meshPath} fill="none" stroke="#0a0a0a" strokeWidth="1" />
      <path d={wallPath} fill="#000" stroke="#000" strokeWidth="11" strokeLinejoin="round" />
      <path d={bodyPath} fill="url(#body)" />

      <g fill="#fff" fontWeight="700">
        <path d="M1248.500 199l13-26.500h6.500l-11.500 26.500zM1262.500 172.500h5.500l12 26.500h-8z" />
        <text x="1280" y="199" fontSize="33" textLength="74" lengthAdjust="spacingAndGlyphs">nsys</text>
        <text x="1291" y="223" fontSize="17.500" textLength="66" lengthAdjust="spacingAndGlyphs">2024 R2</text>
        <path d="M1248 229.500h103v1.500h-103z" />
        <text x="1257" y="251" fontSize="18.500" fontWeight="800" textLength="88" lengthAdjust="spacingAndGlyphs">STUDENT</text>
      </g>

      <g>
        <rect x="702.500" y="528.500" width="313" height="6" fill="#a4a4a4" fillOpacity=".4" stroke="#d8d8d8" />
        <path d="M702 529h78v5h-78zM858 529h80v5h-80z" fill="#000" />
        <g fill="#e6e6e6" fontSize="12">
          <text x="686" y="522" textLength="31">0,000</text>
          <text x="842" y="522" textLength="31">0,200</text>
          <text x="999" y="522" textLength="53">0,400 (m)</text>
          <text x="764" y="547" textLength="31">0,100</text>
          <text x="921" y="547" textLength="31">0,300</text>
        </g>
      </g>

      <g>
        <path d="M1286.500 453h3v40h-3z" fill="#078a07" /><path d="M1287.800 440l5.500 14h-11z" fill="#0a8f0a" />
        <text x="1288" y="431" fontSize="11" fill="#1fae1f">Y</text>
        <path d="M1290 493.500h40v3h-40z" fill="#d40d0d" /><path d="M1342 495l-14 5.500v-11z" fill="#d91414" />
        <text x="1289" y="492" fontSize="9" fill="#1a1aff">Z</text>
        <circle cx="1288" cy="495" r="5.300" fill="url(#origin)" />
        <circle cx="1313.500" cy="469.500" r="5.300" fill="url(#ball)" />
      </g>
    </svg>
  );
}

/* ------------------------------------------------------------------ */
/* Mesh metrics                                                        */
/* ------------------------------------------------------------------ */
const MetricsDock = styled.div`
  margin-top: 4px;
  flex: none;
`;
const MetricsHead = styled(PanelHead)`
  padding-right: 0;
  border-right: 0;
`;
const Metrics = styled.div`
  height: 89px;
  background: ${c.dark};
  padding: 15px 0 0 10px;
  position: relative;
`;
const ControlsButton = styled.div`
  width: 73px;
  height: 24px;
  border: 1px solid;
  border-color: #b5b5b5 #3d3d3d #3d3d3d #b5b5b5;
  background: #5c5c5c;
  box-shadow: inset -1px -1px 0 #2e2e2e;
  padding: 3px 0 0 11px;
  font-family: "Liberation Sans", sans-serif;
`;
const Sliver = styled.i`
  position: absolute;
  right: 0;
  top: 0;
  width: 2px;
  height: 89px;
  background: #f0f0f0;
`;
const BottomTabs = styled.div`
  height: 29px;
  flex: none;
  padding: 4px 0 0 7px;
  display: flex;
  gap: 18px;
  background: linear-gradient(#3a3d42, #3a3d42) 0 23px / 182px 6px no-repeat ${c.frame};
`;
const Status = styled.div`
  height: 17px;
  flex: none;
  display: flex;
  background: #434343;
  padding: 3px 0 0 8px;
`;

export default function App() {
  return (
    <Window>
      <Global />
      <TitleBar>
        <QuickTools>
          <svg width="16" height="16" viewBox="0 0 16 16"><rect width="16" height="16" fill="#111" /><circle cx="5.500" cy="10.500" r="3.300" fill="none" stroke="#f5ae1c" strokeWidth="1.800" /><circle cx="5.500" cy="10.500" r="4.600" fill="none" stroke="#f5ae1c" strokeWidth="1.200" strokeDasharray="1.900 1.700" /><circle cx="12" cy="4.500" r="2" fill="none" stroke="#f5ae1c" strokeWidth="1.400" /><circle cx="12" cy="4.500" r="3.100" fill="none" stroke="#f5ae1c" strokeWidth="1" strokeDasharray="1.400 1.050" /></svg>
          <ToolDivider />
          <svg width="17" height="16" viewBox="0 0 17 16"><path d="M1.500 1h14v11.500l-2.500 2.500H1.500zM4.500 1v5.500h8V1M5.500 15v-5h6v5M10 2.500v2" fill="none" stroke="#3f86d2" strokeWidth="1.400" /></svg>
          <svg width="16" height="16" viewBox="0 0 16 16"><path d="M5 4.500h8" stroke="#fff" strokeWidth="1.300" /><path d="M5 6.500h8L9 10.500z" fill="#fff" /></svg>
        </QuickTools>
        <ContextTab><Fit w={40} color="#3b69b3">Context</Fit></ContextTab>
        <DocTitle><Fit w={353}>A : NACA 0012 - Meshing [CFD PrepPost, CFD PrepPost Pro, CFD Base]</Fit></DocTitle>
        <WindowButtons>
          <svg width="75" height="14" viewBox="0 0 75 14"><path d="M0 7h9" stroke="#fff" strokeWidth="2" /><path d="M37.500 4V1.500h5.500v6h-2.500" fill="none" stroke="#fff" /><rect x="34.500" y="5" width="6" height="6" fill="none" stroke="#fff" strokeWidth="1.500" /><path d="M68 1.500l8 7.500M76 1.500l-8 7.500" stroke="#fff" strokeWidth="2.200" /></svg>
        </WindowButtons>
      </TitleBar>
      <TabRow>
        <Tab $w={56} $kind="file"><Fit w={17}>File</Fit></Tab>
        <Tab $w={57} $gap={8} $kind="active"><Fit w={30}>Home</Fit></Tab>
        <Tab $w={58}><Fit w={28}>Mesh</Fit></Tab>
        <Tab $w={65}><Fit w={37}>Display</Fit></Tab>
        <Tab $w={77}><Fit w={47}>Selection</Fit></Tab>
        <Tab $w={89}><Fit w={61}>Automation</Fit></Tab>
        <Tab $w={143}><Fit w={113}>Learning and Support</Fit></Tab>
        <Tab $w={66}><Fit w={38}>Motion</Fit></Tab>
        <TabTail>
          <Search><Fit w={69} color="#757575">Quick Launch</Fit></Search>
          <svg width="55" height="20" viewBox="0 0 55 20">
            <path d="M3 5l11-2 2.500 11-11 2.500z" fill="none" stroke="#dfe7f3" strokeWidth="1.200" /><path d="M6 9l3.500 4L15 4" fill="none" stroke={c.orange} strokeWidth="1.900" />
            <circle cx="32.500" cy="10" r="7.500" fill="#3f8bd0" /><text x="29.500" y="14.500" fontSize="12" fontWeight="700" fill="#111">?</text><path d="M39 8.500h6l-3 3z" fill="#fff" /><path d="M52 14l3-4v4z" fill={c.orange} />
          </svg>
        </TabTail>
      </TabRow>
      <RibbonBar />
      <Workspace>
        <LeftDock>
          <PanelHead $h={21}><Fit w={39}>Outline</Fit><Dots /><HeadIcons /></PanelHead>
          <FilterBar>
            <Grip $ml={10} />
            <Combo><Fit w={32}>Name</Fit><ComboButton><Caret $ml={0} /></ComboButton></Combo>
            <FilterInput><Fit w={78} color="#666">Search Outline</Fit></FilterInput>
            <svg width="34" height="22" viewBox="0 0 34 22"><path d="M6 7.500l5.500 5 5.500-5" fill="none" stroke={c.orange} strokeWidth="2" /><path d="M24 14h7l-3.500 3.500z" fill="#fff" /></svg>
          </FilterBar>
          <TreeArea>
            {nodes.map((nd) => (
              <TreeRow key={nd.text}>
                <TreeGutter n={nd} />
                <TreeLabel $sel={nd.sel}><Fit w={nd.w} bold={nd.bold} color={nd.sel ? '#111' : '#fff'}>{nd.text}</Fit></TreeLabel>
              </TreeRow>
            ))}
          </TreeArea>
          <DetailsDock>
            <PanelHead $h={20}><Fit w={91}>{'Details of "Mesh"'}</Fit><Dots /><HeadIcons /></PanelHead>
            <Details />
          </DetailsDock>
        </LeftDock>
        <RightDock>
          <GraphicsToolbar />
          <Viewport />
          <MetricsDock>
            <MetricsHead $h={20}>
              <Fit w={71}>Mesh Metrics</Fit><Dots />
              <svg width="35" height="14" viewBox="0 0 35 14"><path d="M0 5h9L4.500 9.500z" fill="#fff" /><path d="M17.500 1.500h5v7h-5zM15.500 8.500h9M20 9v4M21.500 2v6" fill="none" stroke="#fff" strokeWidth="1.200" /><path d="M32.500 3l4 4-4 4" fill="none" stroke="#fff" strokeWidth="1.800" /></svg>
            </MetricsHead>
            <Metrics>
              <ControlsButton><Fit w={49} size={14} color="#f0f0f0">Controls</Fit></ControlsButton>
              <svg width="977" height="50" viewBox="362 629 977 50" fontFamily='"Noto Sans", sans-serif' fontSize="11">
                <rect x="362" y="629" width="977" height="50" fill="#9d9d9d" />
                <path d="M462.500 680v-18.500h853V680" fill="none" stroke="#000" />
                <rect x="1271.500" y="620" width="14" height="65" fill="#00acc6" stroke="#111" />
                <path d="M467 670.500h52" stroke="#1de9b6" strokeWidth="3" strokeLinecap="round" />
                <circle cx="492" cy="670" r="3.500" fill="#1de9b6" stroke="#111" />
                <text x="522" y="674" fill="#111" textLength="19">Tri3</text>
                <path d="M894 670.500h50" stroke="#00acc6" strokeWidth="3" strokeLinecap="round" />
                <circle cx="918" cy="670" r="3.500" fill="#00acc6" stroke="#111" />
                <text x="948" y="674" fill="#111" textLength="34">Quad4</text>
              </svg>
              <Sliver />
            </Metrics>
          </MetricsDock>
        </RightDock>
      </Workspace>
      <BottomTabs>
        <Fit w={114} color="#b3b3b3">Graphics Annotations</Fit>
        <Fit w={32} color="#b3b3b3">Graph</Fit>
      </BottomTabs>
      <Status>
        <Fit w={32}>Ready</Fit>
        <Space $w={838} />
        <svg width="19" height="14" viewBox="0 0 19 14"><path d="M1 5l9-1v8l-9 1z" fill={c.orange} /><path d="M8 3l4 3v6l-4 2" fill="#f7d28e" /><path d="M10 1.500h6v8l-3 2" fill="none" stroke="#eee" strokeWidth="1.300" /></svg>
        <Fit w={70}>No Messages</Fit>
        <Space $w={18} />
        <Fit w={67}>No Selection</Fit>
        <Space $w={21} />
        <svg width="15" height="14" viewBox="0 0 15 14"><path d="M.5 8.500l4-4 4 4z" fill="#fff" /></svg>
        <Fit w={128}>Metric (m, kg, N, s, V, A)</Fit>
        <Space $w={12} />
        <Fit w={42}>Degrees</Fit>
        <Space $w={12} />
        <Fit w={27}>rad/s</Fit>
        <Space $w={12} />
        <Fit w={38}>Celsius</Fit>
      </Status>
    </Window>
  );
}
